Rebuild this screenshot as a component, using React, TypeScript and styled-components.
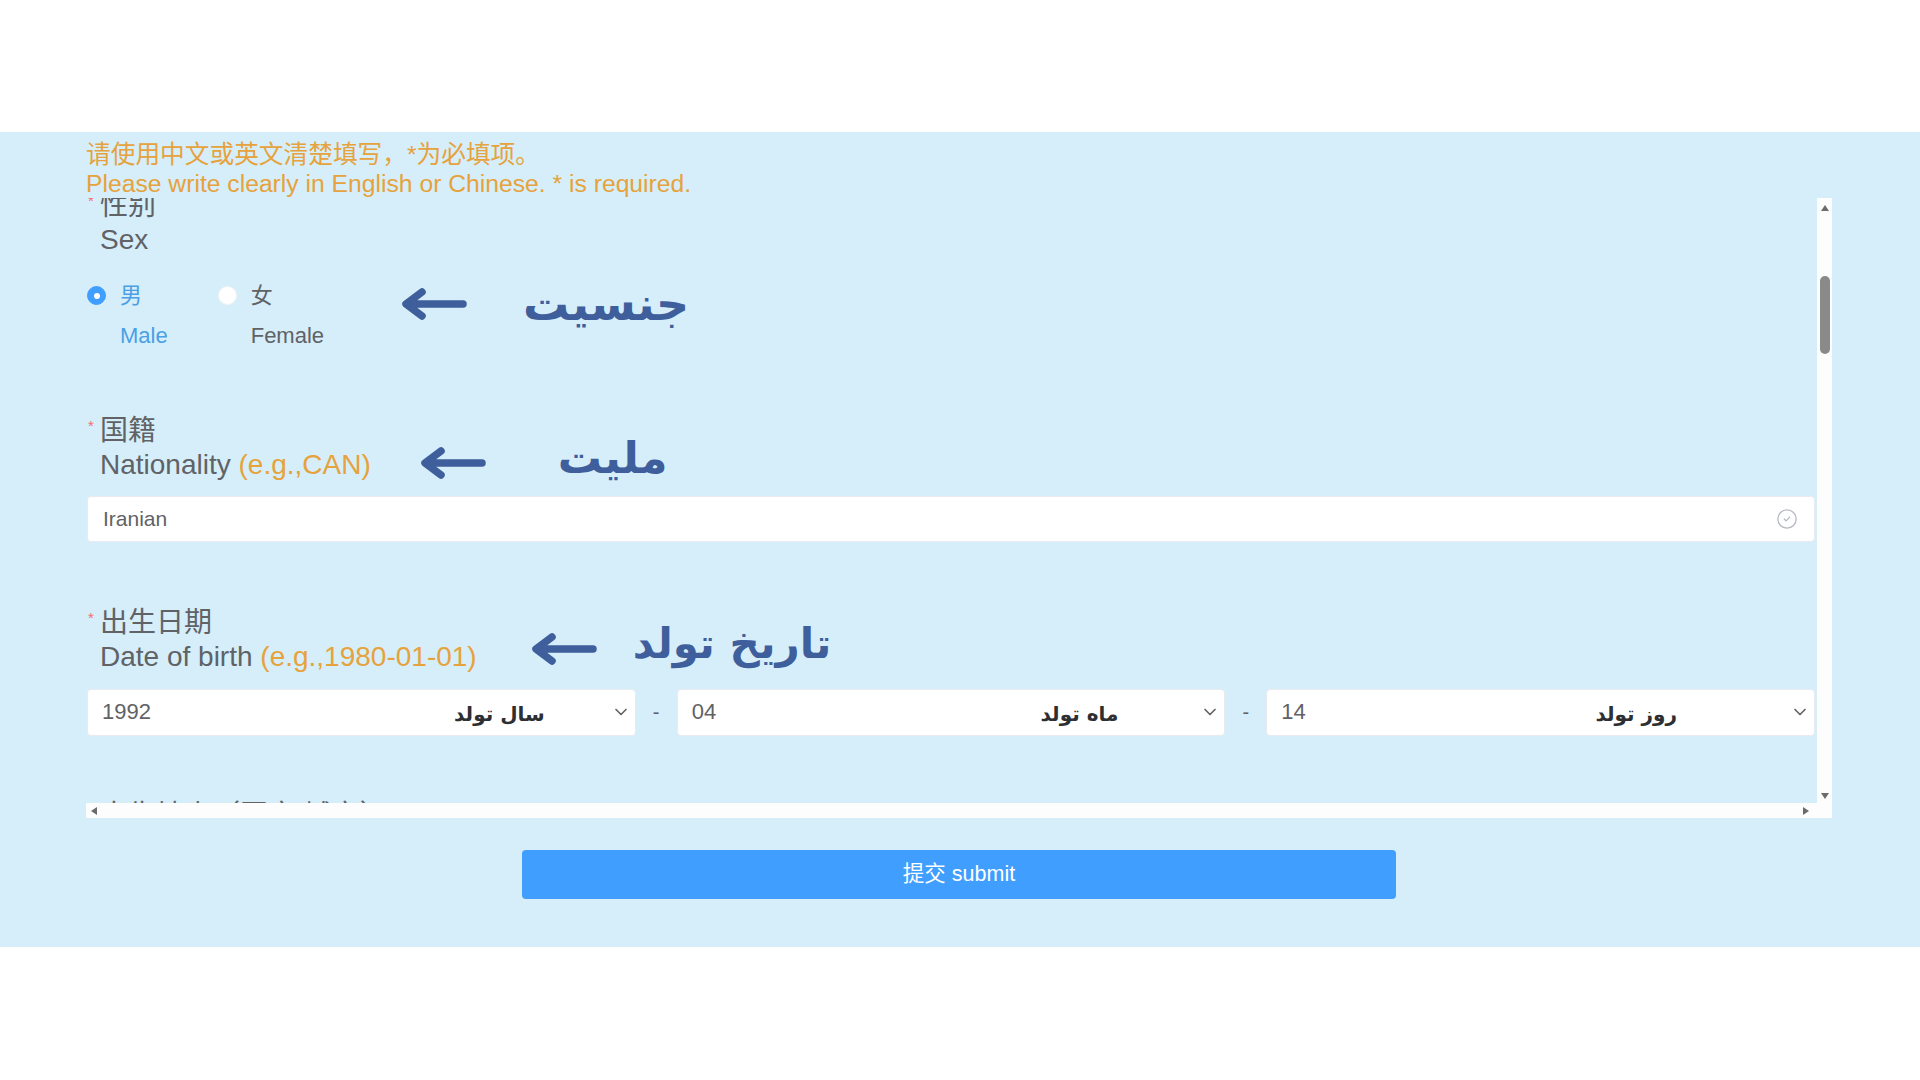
import styled, { createGlobalStyle } from "styled-components";
import { ChevronDown, CircleCheck } from "lucide-react";

const GlobalStyle = createGlobalStyle`
  html, body {
    margin: 0;
    padding: 0;
    background: #ffffff;
    font-family: "Liberation Sans", "Noto Sans CJK SC", Arial, sans-serif;
  }
  * {
    box-sizing: border-box;
  }
`;

function Arrow() {
  return (
    <svg width="68" height="32" viewBox="0 0 68 32">
      <path
        d="M9 16 H64 M23 4 L7 16 L23 28"
        fill="none"
        stroke="#3e5e9c"
        strokeWidth="7.5"
        strokeLinecap="round"
        strokeLinejoin="round"
      />
    </svg>
  );
}

type NoteProps = {
  text: string;
  offset: number;
  gap: number;
  lift?: number;
  size?: number;
  raise?: number;
};

function Note({ text, offset, gap, lift = 0, size = 46, raise = 0 }: NoteProps) {
  return (
    <NoteBox $offset={offset} $gap={gap} $lift={lift}>
      <Arrow />
      <NoteText dir="rtl" $size={size} $raise={raise}>
        {text}
      </NoteText>
    </NoteBox>
  );
}

type SelectProps = {
  value: string;
  hint: string;
  hintGap: number;
};

function DateSelect({ value, hint, hintGap }: SelectProps) {
  return (
    <SelectBox>
      <SelectValue>{value}</SelectValue>
      <SelectHint dir="rtl" $gap={hintGap}>
        {hint}
      </SelectHint>
      <ChevronDown size={20} strokeWidth={2} color="#606266" />
    </SelectBox>
  );
}

function App() {
  return (
    <Page>
      <GlobalStyle />
      <Band>
        <Notice>
          <NoticeLine>请使用中文或英文清楚填写，*为必填项。</NoticeLine>
          <NoticeLine>Please write clearly in English or Chinese. * is required.</NoticeLine>
        </Notice>

        <Frame>
          <Viewport>
            <Content>
              {/* sex */}
              <FormItem $space={0}>
                <Label>
                  <LabelLine>
                    <Star>*</Star>性别
                  </LabelLine>
                  <LabelLine>Sex</LabelLine>
                </Label>
                <SexRow>
                  <RadioGroup>
                    <RadioOption>
                      <RadioDot $checked />
                      <RadioText>
                        <RadioLine $checked>男</RadioLine>
                        <RadioLine $checked>Male</RadioLine>
                      </RadioText>
                    </RadioOption>
                    <RadioOption>
                      <RadioDot />
                      <RadioText>
                        <RadioLine>女</RadioLine>
                        <RadioLine>Female</RadioLine>
                      </RadioText>
                    </RadioOption>
                  </RadioGroup>
                  <Note text="جنسیت" offset={75} gap={56} lift={5} />
                </SexRow>
              </FormItem>

              {/* nationality */}
              <FormItem $space={61}>
                <LabelRow>
                  <Label>
                    <LabelLine>
                      <Star>*</Star>国籍
                    </LabelLine>
                    <LabelLine>
                      Nationality <Hint>(e.g.,CAN)</Hint>
                    </LabelLine>
                  </Label>
                  <Note text="ملیت" offset={47} gap={72} lift={-1} size={44} raise={10} />
                </LabelRow>
                <InputBox>
                  <InputValue>Iranian</InputValue>
                  <CircleCheck size={22} strokeWidth={1.4} color="#b4b8c0" />
                </InputBox>
              </FormItem>

              {/* date of birth */}
              <FormItem $space={64}>
                <LabelRow>
                  <Label>
                    <LabelLine>
                      <Star>*</Star>出生日期
                    </LabelLine>
                    <LabelLine>
                      Date of birth <Hint>(e.g.,1980-01-01)</Hint>
                    </LabelLine>
                  </Label>
                  <Note text="تاریخ تولد" offset={52} gap={36} lift={5} size={42} raise={10} />
                </LabelRow>
                <DateRow>
                  <DateSelect value="1992" hint="سال تولد" hintGap={66} />
                  <Dash>-</Dash>
                  <DateSelect value="04" hint="ماه تولد" hintGap={82} />
                  <Dash>-</Dash>
                  <DateSelect value="14" hint="روز تولد" hintGap={113} />
                </DateRow>
              </FormItem>

              {/* next item, cut off by the scroll box */}
              <FormItem $space={63}>
                <Label>
                  <LabelLine>
                    <Star>*</Star>出生地点（国家/城市）
                  </LabelLine>
                  <LabelLine>Place of birth</LabelLine>
                </Label>
              </FormItem>
            </Content>
          </Viewport>

          <VScroll>
            <ArrowUp />
            <Thumb />
            <Spacer />
            <ArrowDown />
          </VScroll>

          <HScroll>
            <ArrowLeft />
            <ArrowRight />
          </HScroll>

          <Corner />
        </Frame>

        <SubmitRow>
          <SubmitButton>提交 submit</SubmitButton>
        </SubmitRow>
      </Band>
    </Page>
  );
}

export default App;

const Page = styled.div`
  width: 1920px;
  min-height: 1080px;
  background: #ffffff;
  padding-top: 132px;
`;

const Band = styled.section`
  background: #d5eefa;
  padding: 8px 88px 48px 86px;
`;

const Notice = styled.div`
  color: #e6a23c;
  font-size: 24.7px;
  line-height: 29px;
`;

const NoticeLine = styled.div`
  white-space: nowrap;
`;

// scroll box
const Frame = styled.div`
  display: grid;
  grid-template-columns: 1fr 15px;
  grid-template-rows: 605px 15px;
`;

const Viewport = styled.div`
  overflow: hidden;
  padding: 0 2px 0 1px;
`;

const Content = styled.div`
  margin-top: -9px;
`;

const FormItem = styled.div<{ $space: number }>`
  margin-top: ${(p) => p.$space}px;
`;

const LabelRow = styled.div`
  display: flex;
  align-items: flex-end;
`;

const Label = styled.div`
  color: #606266;
  font-size: 28px;
  line-height: 34px;
  padding-left: 13px;
`;

const LabelLine = styled.div`
  white-space: nowrap;
`;

const Star = styled.span`
  display: inline-block;
  width: 12px;
  margin-left: -12px;
  color: #f56c6c;
  font-size: 15px;
  line-height: 24px;
  vertical-align: top;
`;

const Hint = styled.span`
  color: #e6a23c;
`;

// persian notes with arrows
const NoteBox = styled.div<{ $offset: number; $gap: number; $lift: number }>`
  display: flex;
  align-items: center;
  gap: ${(p) => p.$gap}px;
  height: 40px;
  margin-left: ${(p) => p.$offset}px;
  margin-top: ${(p) => p.$lift}px;
  margin-bottom: ${(p) => p.$lift}px;
  flex-shrink: 0;
`;

const NoteText = styled.span<{ $size: number; $raise: number }>`
  font-family: "DejaVu Sans", sans-serif;
  font-weight: 700;
  font-size: ${(p) => p.$size}px;
  line-height: 40px;
  margin-bottom: ${(p) => p.$raise}px;
  color: #3e5e9c;
  white-space: nowrap;
`;

// radios
const SexRow = styled.div`
  display: flex;
  align-items: flex-start;
  margin-top: 22px;
`;

const RadioGroup = styled.div`
  display: flex;
  gap: 50px;
`;

const RadioOption = styled.label`
  display: flex;
  gap: 14px;
`;

const RadioDot = styled.span<{ $checked?: boolean }>`
  width: 19px;
  height: 19px;
  margin-top: 7px;
  border-radius: 50%;
  flex-shrink: 0;
  background: ${(p) => (p.$checked ? "#409eff" : "#ffffff")};
  border: 1px solid ${(p) => (p.$checked ? "#409eff" : "#f2f4f7")};
  display: flex;
  align-items: center;
  justify-content: center;

  &::after {
    content: "";
    width: 6px;
    height: 6px;
    border-radius: 50%;
    background: #ffffff;
    display: ${(p) => (p.$checked ? "block" : "none")};
  }
`;

const RadioText = styled.div`
  display: flex;
  flex-direction: column;
  row-gap: 6px;
`;

const RadioLine = styled.span<{ $checked?: boolean }>`
  font-size: 22px;
  line-height: 34px;
  color: ${(p) => (p.$checked ? "#4a9fe6" : "#606266")};
`;

// input
const InputBox = styled.div`
  margin-top: 14px;
  height: 46px;
  background: #ffffff;
  border: 1px solid #e8ebf0;
  border-radius: 4px;
  display: flex;
  align-items: center;
  padding: 0 16px 0 15px;
`;

const InputValue = styled.span`
  flex: 1;
  font-size: 21px;
  color: #606266;
`;

// date selects
const DateRow = styled.div`
  margin-top: 15px;
  display: flex;
  align-items: center;
`;

const SelectBox = styled.div`
  flex: 1;
  height: 47px;
  background: #ffffff;
  border: 1px solid #e8ebf0;
  border-radius: 4px;
  display: flex;
  align-items: center;
  padding: 0 4px 2px 14px;
`;

const SelectValue = styled.span`
  flex: 1;
  font-size: 22px;
  color: #606266;
`;

const SelectHint = styled.span<{ $gap: number }>`
  font-family: "DejaVu Sans", sans-serif;
  font-weight: 700;
  font-size: 20px;
  color: #2d2f33;
  margin-top: 4px;
  margin-right: ${(p) => p.$gap}px;
  white-space: nowrap;
`;

const Dash = styled.span`
  width: 41px;
  text-align: center;
  font-size: 20px;
  color: #606266;
`;

// scrollbars
const VScroll = styled.div`
  background: #fdfdfd;
  display: flex;
  flex-direction: column;
  align-items: center;
  padding: 7px 0 4px;
`;

const ArrowUp = styled.span`
  width: 0;
  height: 0;
  border-left: 4px solid transparent;
  border-right: 4px solid transparent;
  border-bottom: 6px solid #6b6b6b;
`;

const ArrowDown = styled.span`
  width: 0;
  height: 0;
  border-left: 4px solid transparent;
  border-right: 4px solid transparent;
  border-top: 6px solid #6b6b6b;
`;

const Thumb = styled.span`
  width: 10px;
  height: 78px;
  margin-top: 65px;
  border-radius: 5px;
  background: #8a8a8a;
`;

const Spacer = styled.span`
  flex: 1;
`;

const HScroll = styled.div`
  background: #fdfdfd;
  display: flex;
  align-items: center;
  justify-content: space-between;
  padding: 0 8px 0 5px;
`;

const ArrowLeft = styled.span`
  width: 0;
  height: 0;
  border-top: 4px solid transparent;
  border-bottom: 4px solid transparent;
  border-right: 6px solid #6b6b6b;
`;

const ArrowRight = styled.span`
  width: 0;
  height: 0;
  border-top: 4px solid transparent;
  border-bottom: 4px solid transparent;
  border-left: 6px solid #6b6b6b;
`;

const Corner = styled.div`
  background: #fdfdfd;
`;

// submit
const SubmitRow = styled.div`
  display: flex;
  justify-content: center;
  margin-top: 32px;
`;

const SubmitButton = styled.button`
  width: 874px;
  height: 49px;
  border: none;
  border-radius: 4px;
  background: #409eff;
  color: #ffffff;
  font-family: "Liberation Sans", "Noto Sans CJK SC", sans-serif;
  font-size: 21.5px;
  line-height: 1;
  padding: 1px 0 0;
  cursor: pointer;
`;
